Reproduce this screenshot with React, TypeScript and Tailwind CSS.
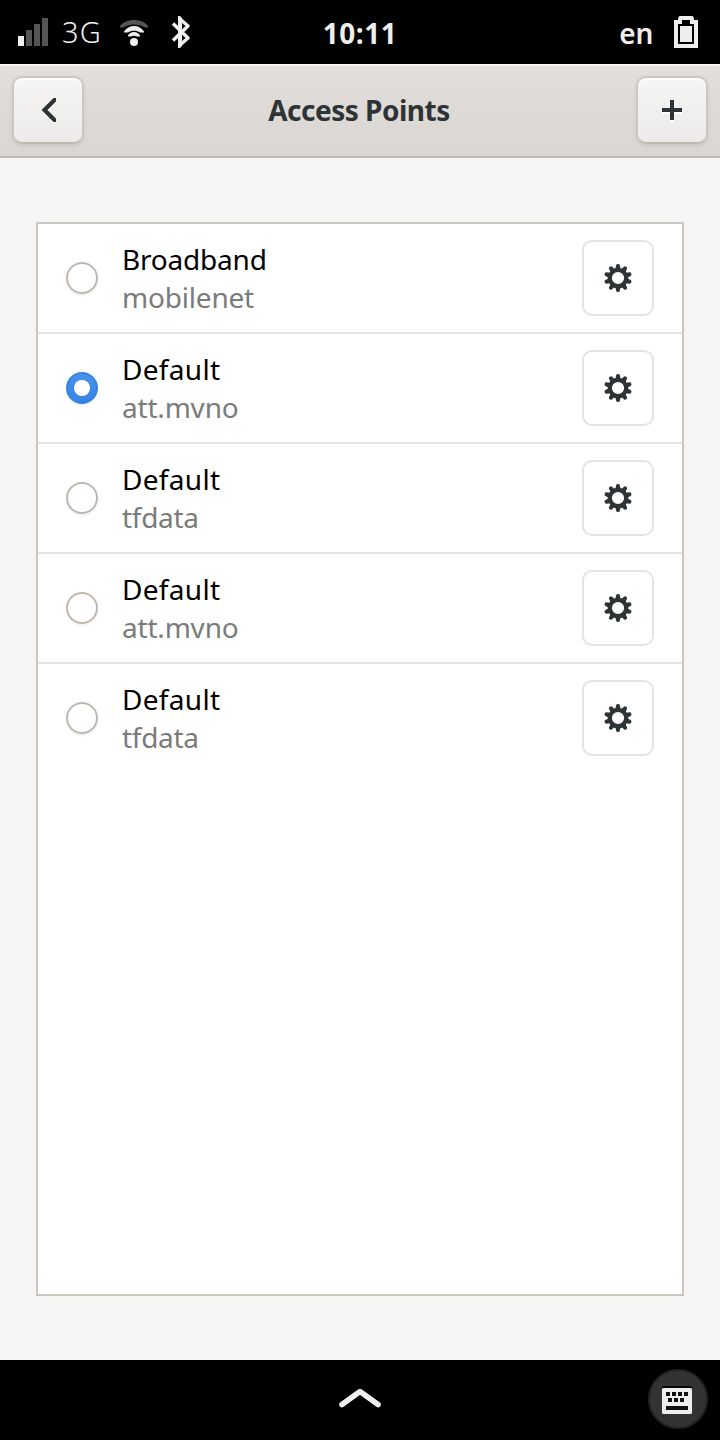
import React, { useState } from 'react';
import clsx from 'clsx';

interface AccessPoint {
  id: number;
  name: string;
  apn: string;
  nameClass: string;
  apnClass: string;
}

const accessPoints: AccessPoint[] = [
  { id: 0, name: 'Broadband', apn: 'mobilenet', nameClass: 'tracking-[-0.2px]', apnClass: 'tracking-[-0.2px]' },
  { id: 1, name: 'Default', apn: 'att.mvno', nameClass: 'tracking-[0.3px]', apnClass: 'tracking-[-0.2px]' },
  { id: 2, name: 'Default', apn: 'tfdata', nameClass: 'tracking-[0.3px]', apnClass: 'tracking-[-0.3px]' },
  { id: 3, name: 'Default', apn: 'att.mvno', nameClass: 'tracking-[0.3px]', apnClass: 'tracking-[-0.2px]' },
  { id: 4, name: 'Default', apn: 'tfdata', nameClass: 'tracking-[0.3px]', apnClass: 'tracking-[-0.3px]' },
];

const teeth = [0, 36, 72, 108, 144, 180, 216, 252, 288, 324];

const GearIcon = () => (
  <svg width="32" height="32" viewBox="-16 -16 32 32">
    <circle r="8.2" fill="none" stroke="#2e3436" strokeWidth="4.2" />
    {teeth.map((angle) => (
      <path key={angle} d="M-2.6 -9 L-1.8 -13 Q-1.6 -14 0 -14 Q1.6 -14 1.8 -13 L2.6 -9 Z" fill="#2e3436" transform={`rotate(${angle})`} />
    ))}
  </svg>
);

const SignalIcon = () => (
  <svg width="30" height="28" viewBox="0 0 30 28" shapeRendering="crispEdges">
    <path d="M0 18h6v10H0z" fill="#eeeeec" />
    <path d="M8 12h6v16H8zM16 6h6v22h-6zM24 0h6v28h-6z" fill="#555553" />
  </svg>
);

const WifiIcon = () => (
  <svg width="28" height="26" viewBox="0 0 28 26">
    <path d="M0 6C6-2 22-2 28 6V7.5H25C19 3.6 9 3.6 3 7.5H0Z" fill="#555553" />
    <path d="M4 11.5C8 4 20 4 24 11.5V12.5H20C17 10 11 10 8 12.5H4Z" fill="#eeeeec" />
    <path d="M8 15.5C10 10.8 18 10.8 20 15.5V16.5H17C15.5 15.6 12.5 15.6 11 16.5H8Z" fill="#eeeeec" />
    <circle cx="14" cy="22" r="4" fill="#eeeeec" />
  </svg>
);

const BluetoothIcon = () => (
  <svg width="20" height="32" viewBox="0 0 20 32" fill="none">
    <path d="M1 7.5L16 22L8 29V3L16 10L1 24.5" stroke="#eeeeec" strokeWidth="3.4" strokeLinejoin="round" />
    <path d="M6 0h2l2 2v28l-2 2H6z" fill="#eeeeec" />
  </svg>
);

const BatteryIcon = () => (
  <svg width="24" height="32" viewBox="0 0 24 32" fill="#eeeeec">
    <path fillRule="evenodd" d="M6 0h12q2 0 2 4h4v28H0V4h4q0-4 2-4zM8 4v4H4v20h16V8h-4V4z" />
    <path d="M6 10h12v16H6z" />
  </svg>
);

const KeyboardIcon = () => (
  <svg width="30" height="28" viewBox="0 0 30 28">
    <rect width="30" height="10" rx="2" fill="#0a0a0a" />
    <rect y="2" width="30" height="26" rx="1.5" fill="#eeeeec" />
    <path d="M4 6h4v4H4zM10 6h4v4h-4zM16 6h4v4h-4zM22 6h4v4h-4zM6 12h4v4H6zM12 12h4v4h-4zM18 12h4v4h-4zM4 20h22v4H4z" fill="#111" />
  </svg>
);

const HeaderButton: React.FC<{ label: string; children: React.ReactNode }> = ({ label, children }) => (
  <button
    aria-label={label}
    className="flex h-[68px] w-[72px] items-center justify-center rounded-[10px] border-2 border-[#cdc7c2] border-b-[#bfb8b1] bg-linear-to-b from-[#f6f5f4] to-[#edebe9] shadow-[inset_0_2px_#fff,0_2px_4px_rgba(0,0,0,0.07)]"
  >
    {children}
  </button>
);

const App = () => {
  const [selected, setSelected] = useState(1);

  return (
    <div className="flex h-[1440px] w-[720px] flex-col overflow-hidden bg-[#f6f5f4] font-['Noto_Sans',sans-serif]">
      {/* Status bar */}
      <div className="grid h-16 grid-cols-[1fr_auto_1fr] items-center bg-black text-[28px] text-[#eeeeec]">
        <div className="flex items-center pl-[18px]">
          <SignalIcon />
          <span className="ml-[14px] w-[41px] pb-px text-[29px] font-[350] tracking-[1.2px] whitespace-nowrap">3G</span>
          <div className="ml-[17px] pt-[2px]"><WifiIcon /></div>
          <div className="ml-6"><BluetoothIcon /></div>
        </div>
        <span className="pt-[2px] font-bold tracking-[0.5px]">10:11</span>
        <div className="flex items-center justify-end pr-[22px]">
          <span className="mr-[21px] pt-[2px] font-semibold tracking-[-0.3px]">en</span>
          <BatteryIcon />
        </div>
      </div>

      {/* Header bar */}
      <div className="flex h-[94px] items-center justify-between border-t-2 border-b-2 border-t-[#f9f8f8] border-b-[#bfb8b1] bg-linear-to-b from-[#e1dedb] to-[#dad6d2] px-3 pb-[2px]">
        <HeaderButton label="Back">
          <svg width="16" height="26" viewBox="0 0 16 26" fill="none">
            <path d="M14 3H16V6.5L7 15L16 24V27H14L2 15Z" fill="#fff" />
            <path d="M13.5 1H16V4.5L7.5 13L16 21.5V25H13.5L1.5 13Z" fill="#2e3436" />
          </svg>
        </HeaderButton>
        <h1 className="pr-[2px] text-[28px] font-bold tracking-[-0.5px] text-[#2e3436]">Access Points</h1>
        <HeaderButton label="Add">
          <svg className="mt-[2px]" width="20" height="22" viewBox="0 0 20 22" shapeRendering="crispEdges">
            <path d="M8 2h4v8h8v4h-8v8H8v-8H0v-4h8z" fill="#fff" />
            <path d="M8 0h4v8h8v4h-8v8H8v-8H0V8h8z" fill="#2e3436" />
          </svg>
        </HeaderButton>
      </div>

      {/* Access point list */}
      <div className="flex-1 px-9 py-16">
        <div className="h-full border-2 border-[#cdc7c2] bg-white">
          {accessPoints.map((ap, i) => (
            <div
              key={ap.id}
              className={clsx('flex h-[110px] items-center border-b-2 pr-7 pl-7', i < accessPoints.length - 1 ? 'border-[#e5e4e4]' : 'border-transparent')}
            >
              <button
                aria-label={ap.name}
                onClick={() => setSelected(ap.id)}
                className={clsx(
                  'flex size-8 shrink-0 items-center justify-center rounded-full border-2 shadow-[0_2px_2px_rgba(0,0,0,0.05)]',
                  selected === ap.id ? 'border-[#3584e4] bg-linear-to-b from-[#4b92e8] to-[#3584e4]' : 'border-[#bfb8b1] bg-white'
                )}
              >
                {selected === ap.id && <span className="size-4 rounded-full bg-white" />}
              </button>
              <div className="ml-6 flex flex-1 flex-col text-[28px] leading-[38px]">
                <span className={clsx('text-black', ap.nameClass)}>{ap.name}</span>
                <span className={clsx('text-[#7b7b7b]', ap.apnClass)}>{ap.apn}</span>
              </div>
              <button aria-label="Settings" className="flex h-[76px] w-[72px] items-center justify-center rounded-[10px] border-2 border-[#e6e3e0]">
                <GearIcon />
              </button>
            </div>
          ))}
        </div>
      </div>

      {/* Bottom bar */}
      <div className="grid h-20 grid-cols-[1fr_auto_1fr] items-center bg-black pr-3">
        <div />
        <svg className="mb-1 ml-3" width="44" height="24" viewBox="0 0 44 24" fill="none">
          <path d="M4 18.5L22 5.5L40 18.5" stroke="#eeeeec" strokeWidth="5.6" strokeLinecap="round" strokeLinejoin="round" />
        </svg>
        <button aria-label="Keyboard" className="mb-[2px] flex size-[60px] items-center justify-center justify-self-end rounded-full border-2 border-[#222] bg-[#333] pt-[2px] pr-[2px]">
          <KeyboardIcon />
        </button>
      </div>
    </div>
  );
};

export default App;
